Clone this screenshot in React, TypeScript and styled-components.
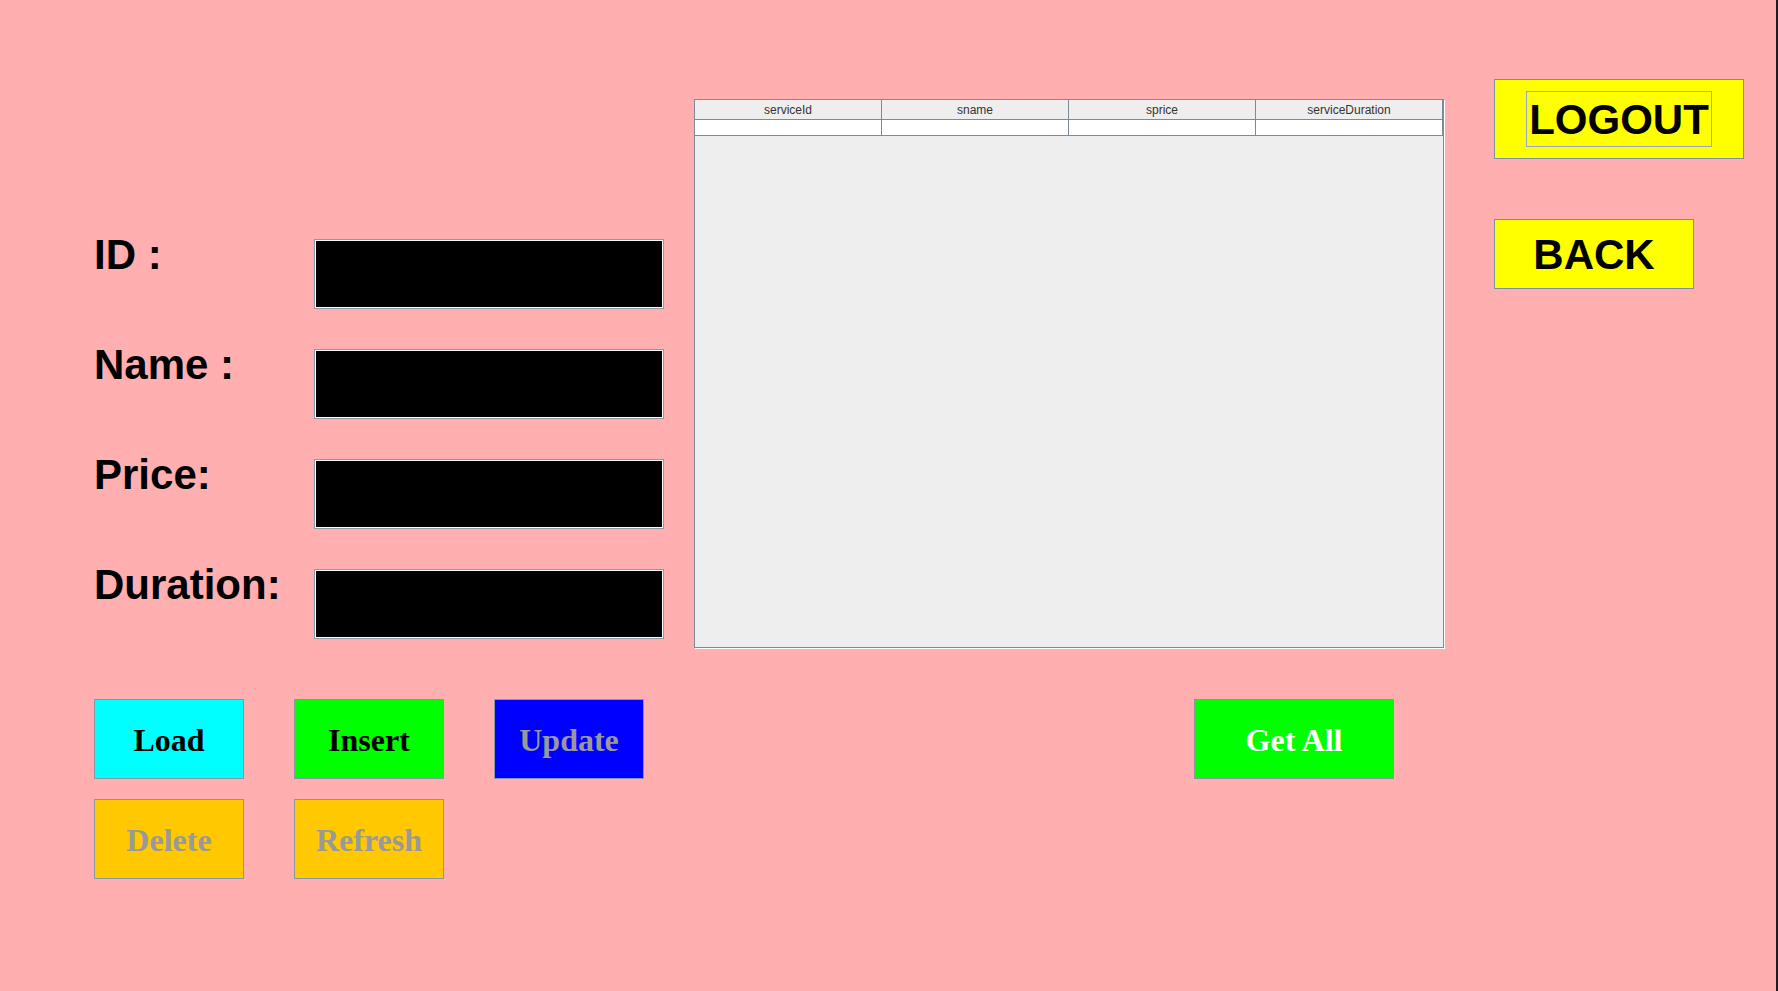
import React from "react";
import styled, { createGlobalStyle } from "styled-components";

const Global = createGlobalStyle`
  html, body { margin: 0; padding: 0; }
  body { background: #ffafaf; overflow: hidden; }
  * { box-sizing: border-box; }
`;

const Page = styled.div`
  width: 1778px;
  height: 991px;
  background: #ffafaf;
  border-right: 2px solid #1c1c1c;
  display: flex;
  align-items: flex-start;
  padding-left: 94px;
`;

const LeftCol = styled.div`
  width: 600px;
  padding-top: 239px;
  display: flex;
  flex-direction: column;
`;

const Form = styled.div`
  display: flex;
  flex-direction: column;
  gap: 40px;
`;

const FieldRow = styled.div`
  display: flex;
  align-items: flex-start;
`;

const Label = styled.label`
  width: 220px;
  margin-top: -5px;
  font-family: "Liberation Sans", Arial, sans-serif;
  font-weight: bold;
  font-size: 42px;
  line-height: 42px;
  color: #000;
`;

const Field = styled.div`
  width: 350px;
  height: 70px;
  background: #000;
  border: 1px solid #8d9aa6;
  box-shadow: inset 0 0 0 1px #ffffff;
`;

const ButtonGrid = styled.div`
  margin-top: 60px;
  display: grid;
  grid-template-columns: repeat(3, 150px);
  column-gap: 50px;
  row-gap: 20px;
`;

const ActionButton = styled.button<{ $bg: string; $fg: string; $w?: number }>`
  width: ${(p) => (p.$w ? `${p.$w}px` : "150px")};
  height: 80px;
  background: ${(p) => p.$bg};
  color: ${(p) => p.$fg};
  border: 1px solid #8a96a2;
  font-family: "Liberation Serif", "Times New Roman", serif;
  font-weight: bold;
  font-size: 32px;
  padding: 3px 0 0 0;
  margin: 0;
  display: flex;
  align-items: center;
  justify-content: center;
  cursor: pointer;
`;

const MiddleCol = styled.div`
  width: 750px;
  padding-top: 99px;
  display: flex;
  flex-direction: column;
`;

const TablePane = styled.div`
  width: 750px;
  height: 549px;
  background: #eeeeee;
  border: 1px solid #7d8b99;
  box-shadow: 1px 1px 0 #ffffff;
  display: flex;
  flex-direction: column;
`;

const TableRow = styled.div<{ $header?: boolean }>`
  display: grid;
  grid-template-columns: repeat(4, 1fr);
  height: ${(p) => (p.$header ? "20px" : "16px")};
  background: ${(p) => (p.$header ? "#eeeeee" : "#ffffff")};
  border-bottom: 1px solid #7d8b99;
`;

const Cell = styled.div<{ $header?: boolean }>`
  border-right: 1px solid #7d8b99;
  font-family: "Liberation Sans", Arial, sans-serif;
  font-size: 12px;
  line-height: 20px;
  color: #333333;
  text-align: center;
  overflow: hidden;
  white-space: nowrap;
`;

const ActionRow = styled.div`
  margin-top: 51px;
  padding-left: 500px;
  display: flex;
`;

const RightCol = styled.div`
  margin-left: 50px;
  padding-top: 79px;
  display: flex;
  flex-direction: column;
  align-items: flex-start;
  gap: 60px;
`;

const NavButton = styled.button<{ $w: number; $h: number }>`
  width: ${(p) => p.$w}px;
  height: ${(p) => p.$h}px;
  background: #ffff00;
  color: #000;
  border: 1px solid #7d8fa6;
  font-family: "Liberation Sans", Arial, sans-serif;
  font-weight: bold;
  font-size: 42px;
  padding: 2px 0 0 0;
  margin: 0;
  display: flex;
  align-items: center;
  justify-content: center;
  cursor: pointer;
`;

const FocusRing = styled.span`
  display: inline-block;
  border: 1px solid #97a8c4;
  padding: 1px 2px 0 2px;
  line-height: 53px;
  margin-top: -3px;
`;

const columns = ["serviceId", "sname", "sprice", "serviceDuration"];
const labels = ["ID :", "Name :", "Price:", "Duration:"];

export default function App() {
  return (
    <>
      <Global />
      <Page>
        <LeftCol>
          <Form>
            {labels.map((l) => (
              <FieldRow key={l}>
                <Label>{l}</Label>
                <Field />
              </FieldRow>
            ))}
          </Form>
          <ButtonGrid>
            <ActionButton $bg="#00ffff" $fg="#000000">Load</ActionButton>
            <ActionButton $bg="#00ff00" $fg="#000000">Insert</ActionButton>
            <ActionButton $bg="#0000ff" $fg="#999999">Update</ActionButton>
            <ActionButton $bg="#ffc800" $fg="#999999">Delete</ActionButton>
            <ActionButton $bg="#ffc800" $fg="#999999">Refresh</ActionButton>
          </ButtonGrid>
        </LeftCol>
        <MiddleCol>
          <TablePane>
            <TableRow $header>
              {columns.map((c) => (
                <Cell key={c} $header>{c}</Cell>
              ))}
            </TableRow>
            <TableRow>
              {columns.map((c) => (
                <Cell key={c} />
              ))}
            </TableRow>
          </TablePane>
          <ActionRow>
            <ActionButton $bg="#00ff00" $fg="#ffffff" $w={200}>Get All</ActionButton>
          </ActionRow>
        </MiddleCol>
        <RightCol>
          <NavButton $w={250} $h={80}>
            <FocusRing>LOGOUT</FocusRing>
          </NavButton>
          <NavButton $w={200} $h={70}>BACK</NavButton>
        </RightCol>
      </Page>
    </>
  );
}
